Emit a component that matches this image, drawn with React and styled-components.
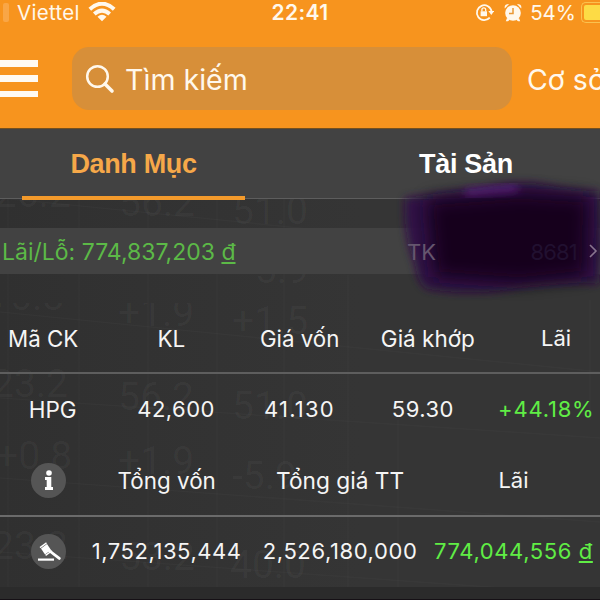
import React from "react";
import styled, { createGlobalStyle } from "styled-components";

const Global = createGlobalStyle`
  *{box-sizing:border-box}
  html,body{margin:0;width:600px;height:600px;overflow:hidden;background:#333}
  body{font-family:Inter,"Noto Sans",sans-serif;color:#f5f5f5}
`;
const Screen = styled.main`
  position:relative;isolation:isolate;width:600px;height:600px;overflow:hidden;background:linear-gradient(90deg,#303030,#353535 60%);
  display:flex;flex-direction:column;
`;
const Header = styled.header`
  height:129px;flex:none;background:#f7941e;border-bottom:1px solid #75501f;color:#fff8ec;
`;
const StatusBar = styled.div`
  height:25px;display:grid;grid-template-columns:1fr auto 1fr;grid-template-rows:25px;align-items:center;
`;
const StatusGroup = styled.div`
  display:flex;align-items:center;height:25px;justify-content:${(p) => (p.$end ? "flex-end" : "flex-start")};
`;
const Signal = styled.i`width:6px;height:19px;border-radius:2px;background:#f9a646;margin-left:3px`;
const Txt = styled.span`
  display:inline-block;white-space:nowrap;line-height:25px;
  padding-top:${(p) => p.$drop ?? 0}px;
  font-size:${(p) => p.$size || 22}px;
  font-weight:${(p) => p.$weight || 400};
  letter-spacing:${(p) => p.$track || 0}px;
  color:${(p) => p.$color || "inherit"};
  margin-left:${(p) => p.$gap || 0}px;
`;
const WifiIcon = styled.svg`margin-left:8px`;
const AlarmIcon = styled.svg`margin-left:10px`;
const Chevron = styled.svg`margin-left:12px`;
const Battery = styled.i`
  width:19px;height:21px;margin-left:5px;padding:2px 0 2px 2px;border:1.5px solid #fac24f;border-right:0;border-radius:5px 0 0 5px;
  &::before{content:"";display:block;height:100%;background:#fddb45;border-radius:2px 0 0 2px}
`;
const Toolbar = styled.div`
  display:flex;align-items:center;height:63px;margin-top:22px;
`;
const Burger = styled.div`
  width:38px;height:37px;flex:none;display:flex;flex-direction:column;justify-content:space-between;
  i{height:6.5px;background:#fffaf2}
`;
const Search = styled.div`
  margin-left:34px;width:440px;height:63px;flex:none;border-radius:17px;background:#d78f39;display:flex;align-items:center;padding-left:13px;
`;
const Tabs = styled.nav`
  height:70px;flex:none;display:grid;grid-template-columns:267px 1fr;background:#424242;border-bottom:1px solid #5d5d5d;
`;
const Tab = styled.div`
  height:71px;padding-top:20px;text-align:center;font:bold 27px/31px "Liberation Sans",Arial,sans-serif;
  letter-spacing:${(p) => p.$track}px;color:${(p) => (p.$active ? "#f6a849" : "#fff")};
  margin-left:${(p) => (p.$active ? 22 : 65)}px;margin-right:${(p) => (p.$active ? 22 : 0)}px;
  border-bottom:${(p) => (p.$active ? "4px solid #f39a2b" : "0")};
`;
const Summary = styled.div`
  height:46px;flex:none;margin-top:29px;padding:0 2px;background:#424242;color:#5cb947;display:flex;align-items:center;
`;
const Unit = styled.span`text-decoration:underline;text-decoration-thickness:2px;text-underline-offset:2px`;
const Account = styled.span`
  position:relative;z-index:2;margin-left:auto;width:191px;display:flex;align-items:center;
`;
const Tail = styled.span`margin-left:auto`;
const Row = styled.div`
  flex:none;display:grid;align-items:center;justify-items:center;
  grid-template-columns:${(p) => p.$cols};
  height:${(p) => p.$h}px;
  margin-left:${(p) => p.$shift || 0}px;
`;
const Rule = styled.div`flex:none;height:2px;background:${(p) => p.$color}`;
const Round = styled.div`
  width:35px;height:35px;border-radius:50%;background:#555;display:flex;align-items:center;justify-content:center;
`;
const Footer = styled.div`flex:1;background:#2b2b2b;border-bottom:1px solid #151015`;
const Table = styled.section`flex:none;padding-top:29px;height:313px`;
const Overlay = styled.svg`
  position:absolute;left:0;top:0;width:600px;height:600px;pointer-events:none;
  z-index:${(p) => (p.$behind ? -1 : 1)};
`;

const upperMarks = [[-16, 207, "-26.2"], [119, 216, "56.2"], [232, 224, "51.0"], [244, 283, "-5.9"]];
const lowerMarks = [
  [-12, 310, "+0.8"], [118, 326, "+1.9"], [232, 334, "+1.5"],
  [-8, 397, "23.2"], [118, 410, "56.2"], [232, 419, "51.0"],
  [-4, 469, "+0.8"], [118, 474, "+1.9"], [232, 489, "-5.9"],
  [-8, 559, "23.2"], [119, 570, "53.2"], [230, 578, "40.0"],
];
const lines = [
  "M0 312L600 372", "M0 398L600 438", "M0 478L600 522", "M0 552L600 595", "M0 198L600 258",
  "M8 199V587", "M79 199V587", "M148 199V587", "M217 199V587", "M284 199V587", "M348 275V587", "M398 420V587", "M590 300V420",
];

function Backdrop() {
  return (
    <Overlay $behind viewBox="0 0 600 600">
      <defs><clipPath id="lower"><rect y="303" width="600" height="284" /></clipPath></defs>
      <g fontFamily="Roboto, sans-serif" fontSize="39" fill="#fff" fillOpacity=".038">
        {upperMarks.map(([x, y, t]) => <text key={x + "/" + y} x={x} y={y}>{t}</text>)}
        <g clipPath="url(#lower)">
          {lowerMarks.map(([x, y, t]) => <text key={x + "/" + y} x={x} y={y}>{t}</text>)}
        </g>
      </g>
      {lines.map((d) => <path key={d} d={d} stroke="#fff" strokeOpacity=".02" strokeWidth="1.5" />)}
    </Overlay>
  );
}

function Scribble() {
  return (
    <Overlay viewBox="0 0 600 600">
      <defs>
        <filter id="soft" x="-10%" y="-20%" width="120%" height="140%"><feGaussianBlur stdDeviation="4" /></filter>
        <filter id="softer" x="-30%" y="-30%" width="160%" height="160%"><feGaussianBlur stdDeviation="9" /></filter>
        <filter id="glow" x="-30%" y="-100%" width="160%" height="300%"><feGaussianBlur stdDeviation="4" /></filter>
      </defs>
      <path filter="url(#soft)" fill="#2e0d47" fillOpacity=".93" d="M405 198Q440 193 480 188Q515 180 541 184Q575 191 599 191L602 240L599 284Q570 281 525 286Q480 297 428 289Q418 285 415 264Q403 235 405 198Z" />
      <path filter="url(#softer)" fill="#13001f" d="M427 200L520 193L589 197L587 276L520 283L434 277Z" />
      <path filter="url(#glow)" stroke="#6a2293" strokeOpacity=".7" strokeWidth="7" fill="none" d="M465 193Q490 190 518 188" />
    </Overlay>
  );
}

export default function App() {
  return (
    <Screen>
      <Global />
      <Backdrop />
      <Header>
        <StatusBar>
          <StatusGroup>
            <Signal />
            <Txt $size={20.5} $gap={8} $track={0.3}>Viettel</Txt>
            <WifiIcon width="28" height="21" viewBox="0 0 28 21">
              <g fill="none" stroke="#fff8ec" strokeWidth="4">
                <path d="M1.8 7.2Q14-3.8 26.2 7.2" /><path d="M6.3 12Q14 5.2 21.7 12" />
              </g>
              <path d="M9.5 14.7Q14 11 18.5 14.7L14 19.3Z" fill="#fff8ec" />
            </WifiIcon>
          </StatusGroup>
          <Txt $size={21} $weight={600} $track={0.4}>22:41</Txt>
          <StatusGroup $end>
            <svg width="19" height="19" viewBox="0 0 19 19">
              <path d="M14.8 14.6A7.4 7.4 0 1 1 16.6 8.4" fill="none" stroke="#fff8ec" strokeWidth="1.8" />
              <path d="M13.3 8H19.2L16.3 12Z" fill="#fff8ec" />
              <path d="M5.6 8.3H12V13.2H5.6Z" fill="#fff8ec" /><path d="M6.9 8.5V6.7a1.9 1.9 0 0 1 3.8 0V8.5" fill="none" stroke="#fff8ec" strokeWidth="1.3" />
            </svg>
            <AlarmIcon width="18" height="19" viewBox="0 0 18 19">
              <g fill="#fff8ec"><circle cx="9" cy="10" r="7.8" /><path d="M.8 5.6Q-.2 1.2 5.1 1.1ZM17.2 5.6Q18.2 1.2 12.9 1.1ZM3 15L1.8 18.2H4L6 16.5ZM15 15L16.2 18.2H14L12 16.5Z" /></g>
              <path d="M9 5V10.4H5" fill="none" stroke="#e99835" strokeWidth="1.5" />
            </AlarmIcon>
            <Txt $size={20.5} $gap={8}>54%</Txt>
            <Battery />
          </StatusGroup>
        </StatusBar>
        <Toolbar>
          <Burger><i /><i /><i /></Burger>
          <Search>
            <svg width="30" height="30" viewBox="0 0 30 30" fill="none" stroke="#fff8ec">
              <circle cx="12.5" cy="12.5" r="10.3" strokeWidth="2.5" /><path d="M20 20L27 27" strokeWidth="3.6" strokeLinecap="round" />
            </svg>
            <Txt $size={28.6} $gap={10} $drop={1}>Tìm kiếm</Txt>
          </Search>
          <Txt $size={28.5} $gap={15} $drop={1}>Cơ sở</Txt>
        </Toolbar>
      </Header>
      <Tabs>
        <Tab $active $track={-0.35}>Danh Mục</Tab>
        <Tab $track={-0.3}>Tài Sản</Tab>
      </Tabs>
      <Summary>
        <Txt $size={23} $drop={2}>Lãi/Lỗ: 774,837,203 <Unit>đ</Unit></Txt>
        <Account>
          <Txt $color="#65566e" $drop={2}>TK</Txt>
          <Tail><Txt $color="#211030" $drop={2} $track={-0.8}>8681</Txt></Tail>
          <Chevron width="9" height="14" viewBox="0 0 9 14"><path d="M1 1L7 7L1 13" stroke="#88758f" strokeWidth="1.6" fill="none" /></Chevron>
        </Account>
      </Summary>
      <Table>
        <Row $cols="repeat(5,128.25px)" $shift={-21} $h={69}>
          <Txt $drop={1} $size={22.3}>Mã CK</Txt><Txt $drop={1} $size={22.5}>KL</Txt><Txt $drop={1} $size={22.3}>Giá vốn</Txt><Txt $drop={1} $size={22.5}>Giá khớp</Txt><Txt $drop={1}>Lãi</Txt>
        </Row>
        <Rule $color="#5e5e5e" />
        <Row $cols="repeat(5,123.4px)" $shift={-9} $h={71}>
          <Txt $size={22.5}>HPG</Txt><Txt $track={0.5}>42,600</Txt><Txt $track={1.2}>41.130</Txt><Txt $track={0.5}>59.30</Txt><Txt $track={0.8} $color="#60ed45">+44.18%</Txt>
        </Row>
        <Row $cols="63px repeat(3,173.4px)" $shift={17} $h={70}>
          <Round>
            <svg width="10" height="20" viewBox="0 0 10 20" fill="#fff"><circle cx="5" cy="3" r="2.8" /><path d="M1 7H7.3V17H9V20H1V17H2.7V10H1Z" /></svg>
          </Round>
          <Txt $size={22.4}>Tổng vốn</Txt><Txt $size={22.7}>Tổng giá TT</Txt><Txt>Lãi</Txt>
        </Row>
        <Rule $color="#6b6b6b" />
        <Row $cols="63px repeat(3,173.4px)" $shift={17} $h={69}>
          <Round>
            <svg width="24" height="20" viewBox="0 0 24 20" fill="#fff">
              <path d="M4 6.6L10 2L14 8L8 12.4Z" /><path d="M3 5.6L9.5.9M8.6 13.4L15 8.8" stroke="#fff" strokeWidth="1.4" /><path d="M12 8.5L22.3 16.4" stroke="#fff" strokeWidth="2.8" strokeLinecap="round" /><path d="M1 16.5H17V18.7H1Z" />
            </svg>
          </Round>
          <Txt $track={0.55}>1,752,135,444</Txt><Txt $track={0.6}>2,526,180,000</Txt><Txt $track={0.6} $color="#60ed45">774,044,556 <Unit>đ</Unit></Txt>
        </Row>
      </Table>
      <Footer />
      <Scribble />
    </Screen>
  );
}
